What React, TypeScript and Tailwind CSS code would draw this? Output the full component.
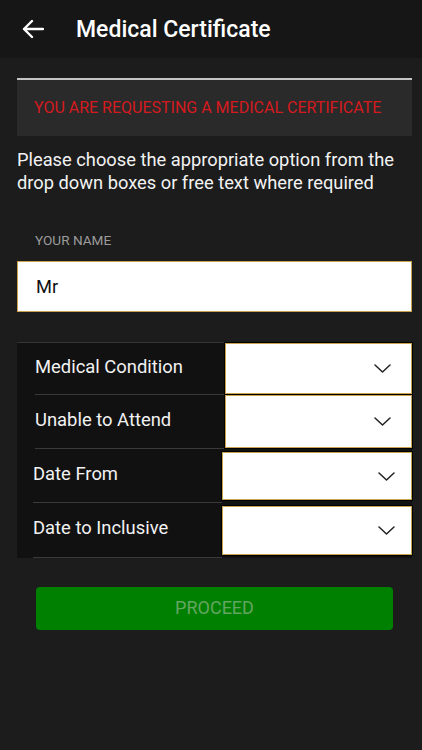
import React from "react"

const rows = [
  { label: "Medical Condition", h: "h-[52px]", inset: false },
  { label: "Unable to Attend", h: "h-[54px]", inset: false },
  { label: "Date From", h: "h-[54px]", inset: true },
  { label: "Date to Inclusive", h: "h-[55px]", inset: true },
]

function Chevron() {
  return (
    <svg width="17" height="9" viewBox="0 0 17 9" fill="none">
      <path d="M1 1l7.5 7 7.5-7" stroke="#222" strokeWidth="1.5" strokeLinecap="round" strokeLinejoin="round" />
    </svg>
  )
}

export default function App() {
  return (
    <div className="min-h-[750px] bg-[#1c1c1c] font-['Roboto',sans-serif]">
      <header className="h-[58px] bg-[#161616] flex items-center">
        <div className="pl-[22px] w-[76px]">
          <svg width="22" height="20" viewBox="0 0 22 20" fill="none">
            <path d="M21 10H2M10 2L2 10l8 8" stroke="#fff" strokeWidth="2.4" strokeLinecap="round" strokeLinejoin="round" />
          </svg>
        </div>
        <h1 className="text-white text-[23px] font-medium pt-[2px]">Medical Certificate</h1>
      </header>

      <main className="pl-[17px] pr-[10px]">
        <div className="mt-[20px] h-[2px] bg-[#c4c4c4]" />
        <div className="h-[56px] bg-[#2a2a2a] flex items-center pl-[17px]">
          <span className="text-[#d51a1f] text-[16px]">YOU ARE REQUESTING A MEDICAL CERTIFICATE</span>
        </div>

        <p className="mt-[12px] text-[#f2f2f2] text-[18.3px] leading-[23px]">
          Please choose the appropriate option from the drop down boxes or free text where required
        </p>

        <div className="mt-[38px] pl-[18px] text-[#9b9b9b] text-[13.6px] leading-[16px]">YOUR NAME</div>
        <div className="mt-[13px] h-[51px] bg-white border border-[#c9a24e] flex items-center pl-[18px]">
          <span className="text-[#111] text-[18.3px]">Mr</span>
        </div>

        <div className="mt-[30px] bg-[#111111] border-t border-[#333]">
          {rows.map((r) => (
            <div key={r.label} className={`flex ${r.h}`}>
              <div className={r.inset ? "w-[205px] pl-[16px] flex" : "w-[208px] pl-[18px] flex"}>
                <div className="flex-1 flex items-center pb-[4px] border-b border-[#3a3a3a]">
                  <span className="text-[#f2f2f2] text-[18.4px]">{r.label}</span>
                </div>
              </div>
              <div className={`flex-1 flex ${r.inset ? "py-[3px]" : "pb-[1px]"}`}>
                <div
                  className={`flex-1 bg-white border border-[#c9a24e] shadow-[0_0_0_1px_#000] flex items-center justify-end ${
                    r.inset ? "pr-[16px]" : "pr-[20px]"
                  }`}
                >
                  <Chevron />
                </div>
              </div>
            </div>
          ))}
        </div>

        <button className="mt-[29px] ml-[19px] w-[357px] h-[43px] bg-[#008000] rounded-[4px] text-[#62a662] text-[18px] pb-[2px]">
          PROCEED
        </button>
      </main>
    </div>
  )
}
